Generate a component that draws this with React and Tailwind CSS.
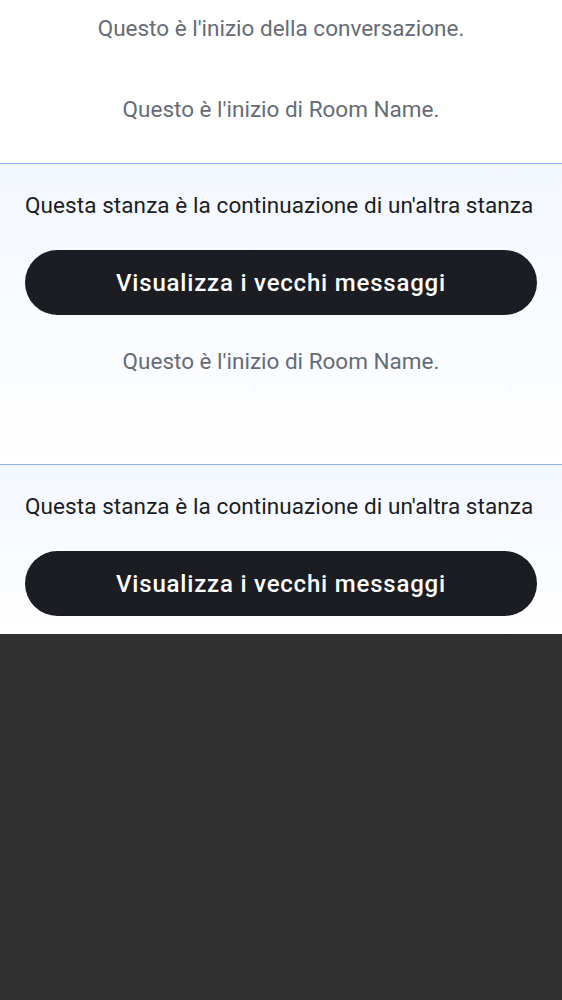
export default function App() {
  const font = { fontFamily: 'Roboto, "Noto Sans", sans-serif' };

  const Notice = ({ extra, last }) => (
    <div className={`border-t border-[#8ab4f8] bg-gradient-to-b from-[#f3f7ff] to-white px-[25px] pt-[29px] ${last ? 'pb-[18px]' : 'pb-[91px]'}`}>
      <p className="whitespace-nowrap text-left text-[22.5px] leading-[24px] tracking-[0.08px] text-[#1b1d22]">
        Questa stanza è la continuazione di un'altra stanza
      </p>
      <button className="mt-[33px] flex h-[65px] w-full items-center justify-center rounded-full bg-[#1b1d22] text-[24px] font-medium tracking-[0.8px] text-white">
        Visualizza i vecchi messaggi
      </button>
      {extra && (
        <p className="mt-[34px] text-center text-[22.5px] leading-[24px] text-[#656c76]">
          Questo è l'inizio di Room Name.
        </p>
      )}
    </div>
  );

  return (
    <div style={font} className="flex min-h-screen flex-col bg-[#303030]">
      <div className="bg-white pt-4 pb-[42px]">
        <p className="text-center text-[22.5px] leading-[24px] text-[#656c76]">
          Questo è l'inizio della conversazione.
        </p>
        <p className="mt-[57px] text-center text-[22.5px] leading-[24px] text-[#656c76]">
          Questo è l'inizio di Room Name.
        </p>
      </div>
      <Notice extra />
      <Notice last />
    </div>
  );
}
